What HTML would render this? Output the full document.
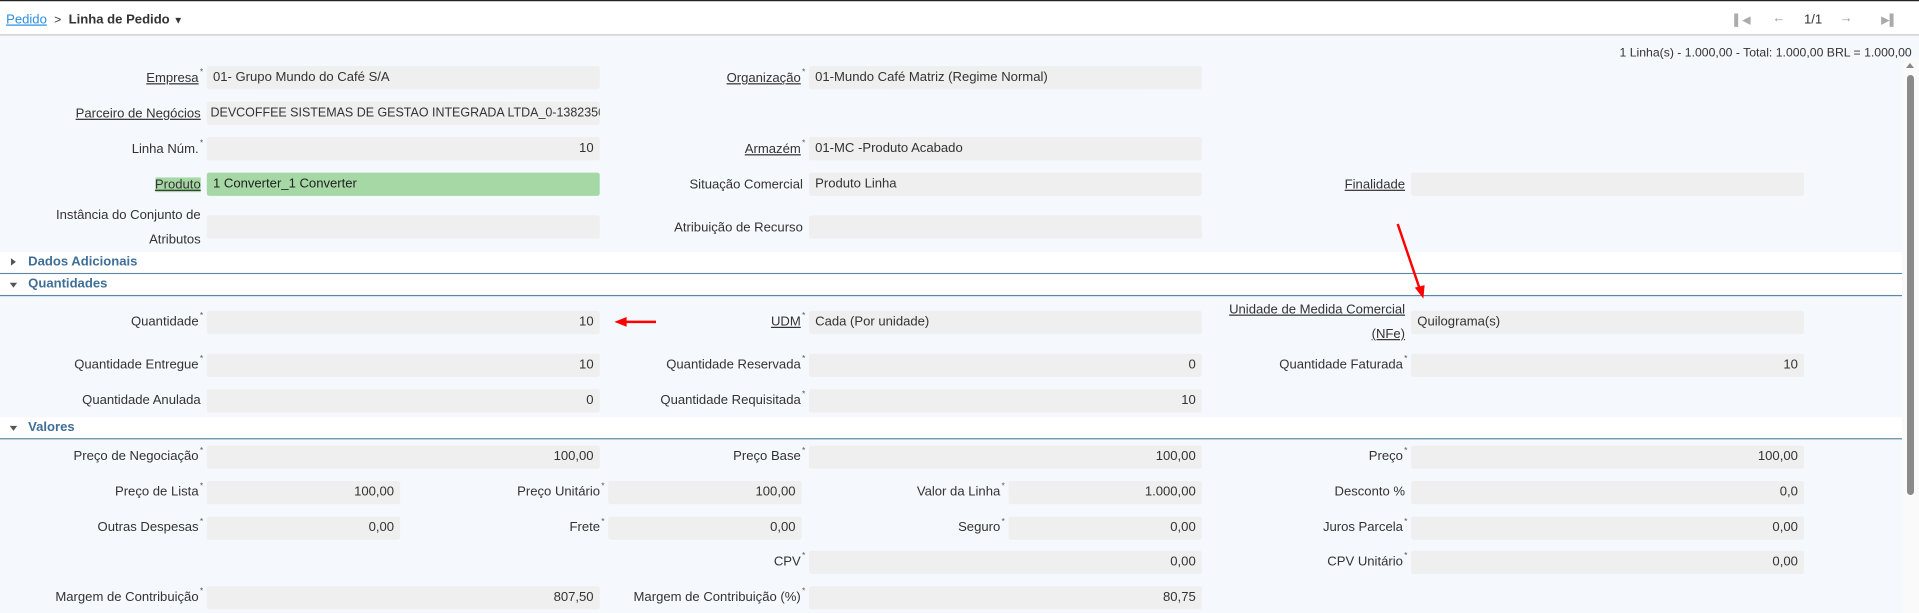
<!DOCTYPE html>
<html><head><meta charset="utf-8"><style>
html,body{margin:0;padding:0;width:1919px;height:613px;overflow:hidden;background:#f5f8fc;}
#w{position:absolute;left:0;top:0;width:1568px;height:501px;transform:scale(1.2239);transform-origin:0 0;font-family:"Liberation Sans",sans-serif;font-size:10.7px;color:#333;}
#top{position:absolute;left:0;top:0;width:1568px;height:29px;background:#fff;border-top:1px solid #222;border-bottom:1px solid #c8c8c8;box-sizing:border-box;}
.a{position:absolute;white-space:nowrap;}
.l{position:absolute;text-align:right;line-height:16px;height:16px;white-space:nowrap;}
.l sup{font-size:7px;vertical-align:top;line-height:0;position:relative;top:4px;margin-left:1px;color:#555;}
.u{text-decoration:underline;}
.i{position:absolute;height:19px;line-height:19px;background:#efefef;border-radius:2px;padding:0 5px;box-sizing:border-box;white-space:nowrap;overflow:hidden;}
.r{text-align:right;}
.hd{position:absolute;left:0;width:1554px;background:#fff;border-bottom:1px solid #5b87a8;height:17px;line-height:16px;font-weight:bold;color:#3f6f98;}
.hd span{position:absolute;left:23px;}
.tri{position:absolute;width:0;height:0;}
</style></head><body>
<div id="w">
<div id="top">
 <div class="a" style="left:5px;top:9px;"><span class="u" style="color:#2a8fe0">Pedido</span> <span style="font-size:10px;margin:0 3px">&gt;</span> <b>Linha de Pedido</b> <span style="font-size:8px">&#9660;</span></div>
 <div class="a" style="left:1417px;top:10px;color:#aaa;font-size:9px">&#9612;&#9664;</div>
 <div class="a" style="left:1448px;top:8px;color:#999">&larr;</div>
 <div class="a" style="left:1474px;top:9px;color:#333">1/1</div>
 <div class="a" style="left:1503px;top:8px;color:#999">&rarr;</div>
 <div class="a" style="left:1537px;top:10px;color:#aaa;font-size:9px">&#9654;&#9612;</div>
</div>
<div class="a" style="right:6px;top:38px;font-size:10px">1 Linha(s) - 1.000,00 - Total: 1.000,00 BRL = 1.000,00</div>

<div class="l" style="right:1402px;top:56px"><span class="u">Empresa</span><sup>*</sup></div>
<div class="i" style="left:169px;width:321px;top:54px">01- Grupo Mundo do Café S/A</div>
<div class="l" style="right:910px;top:56px"><span class="u">Organização</span><sup>*</sup></div>
<div class="i" style="left:661px;width:321px;top:54px">01-Mundo Café Matriz (Regime Normal)</div>
<div class="l" style="right:1404px;top:85px"><span class="u">Parceiro de Negócios</span></div>
<div class="i" style="left:169px;width:321px;top:83px;font-size:10.2px;padding:0 3px">DEVCOFFEE SISTEMAS DE GESTAO INTEGRADA LTDA_0-138235080</div>
<div class="l" style="right:1402px;top:114px">Linha Núm.<sup>*</sup></div>
<div class="i r" style="left:169px;width:321px;top:112px">10</div>
<div class="l" style="right:910px;top:114px"><span class="u">Armazém</span><sup>*</sup></div>
<div class="i" style="left:661px;width:321px;top:112px">01-MC -Produto Acabado</div>
<div class="l" style="right:1404px;top:143px"><span class="u" style="background:#a6d8a6">Produto</span></div>
<div class="i" style="left:169px;width:321px;top:141px;background:#a6d8a6;color:#222">1 Converter_1 Converter</div>
<div class="l" style="right:912px;top:143px">Situação Comercial</div>
<div class="i" style="left:661px;width:321px;top:141px">Produto Linha</div>
<div class="l" style="right:420px;top:143px"><span class="u">Finalidade</span></div>
<div class="i" style="left:1153px;width:321px;top:141px"></div>
<div class="l" style="right:1404px;top:166px;line-height:20px;height:40px">Instância do Conjunto de<br>Atributos</div>
<div class="i" style="left:169px;width:321px;top:176px"></div>
<div class="l" style="right:912px;top:178px">Atribuição de Recurso</div>
<div class="i" style="left:661px;width:321px;top:176px"></div>

<div class="hd" style="top:206px"><div class="tri" style="border-left:4px solid #555;border-top:3px solid transparent;border-bottom:3px solid transparent;top:5px;left:9px"></div><span>Dados Adicionais</span></div>
<div class="hd" style="top:224px"><div class="tri" style="border-top:4px solid #555;border-left:3px solid transparent;border-right:3px solid transparent;top:7px;left:8px"></div><span>Quantidades</span></div>

<div class="l" style="right:1402px;top:255px">Quantidade<sup>*</sup></div>
<div class="i r" style="left:169px;width:321px;top:254px">10</div>
<div class="l" style="right:910px;top:255px"><span class="u">UDM</span><sup>*</sup></div>
<div class="i" style="left:661px;width:321px;top:254px">Cada (Por unidade)</div>
<div class="l" style="right:420px;top:243px;line-height:20px;height:40px"><span class="u">Unidade de Medida Comercial<br>(NFe)</span></div>
<div class="i" style="left:1153px;width:321px;top:254px">Quilograma(s)</div>
<div class="l" style="right:1402px;top:290px">Quantidade Entregue<sup>*</sup></div>
<div class="i r" style="left:169px;width:321px;top:289px">10</div>
<div class="l" style="right:910px;top:290px">Quantidade Reservada<sup>*</sup></div>
<div class="i r" style="left:661px;width:321px;top:289px">0</div>
<div class="l" style="right:418px;top:290px">Quantidade Faturada<sup>*</sup></div>
<div class="i r" style="left:1153px;width:321px;top:289px">10</div>
<div class="l" style="right:1404px;top:319px">Quantidade Anulada</div>
<div class="i r" style="left:169px;width:321px;top:318px">0</div>
<div class="l" style="right:910px;top:319px">Quantidade Requisitada<sup>*</sup></div>
<div class="i r" style="left:661px;width:321px;top:318px">10</div>

<div class="hd" style="top:341px"><div class="tri" style="border-top:4px solid #555;border-left:3px solid transparent;border-right:3px solid transparent;top:7px;left:8px"></div><span>Valores</span></div>

<div class="l" style="right:1402px;top:365px">Preço de Negociação<sup>*</sup></div>
<div class="i r" style="left:169px;width:321px;top:364px">100,00</div>
<div class="l" style="right:910px;top:365px">Preço Base<sup>*</sup></div>
<div class="i r" style="left:661px;width:321px;top:364px">100,00</div>
<div class="l" style="right:418px;top:365px">Preço<sup>*</sup></div>
<div class="i r" style="left:1153px;width:321px;top:364px">100,00</div>
<div class="l" style="right:1402px;top:394px">Preço de Lista<sup>*</sup></div>
<div class="i r" style="left:169px;width:158px;top:393px">100,00</div>
<div class="l" style="right:1074px;top:394px">Preço Unitário<sup>*</sup></div>
<div class="i r" style="left:497px;width:158px;top:393px">100,00</div>
<div class="l" style="right:747px;top:394px">Valor da Linha<sup>*</sup></div>
<div class="i r" style="left:824px;width:158px;top:393px">1.000,00</div>
<div class="l" style="right:420px;top:394px">Desconto %</div>
<div class="i r" style="left:1153px;width:321px;top:393px">0,0</div>
<div class="l" style="right:1402px;top:423px">Outras Despesas<sup>*</sup></div>
<div class="i r" style="left:169px;width:158px;top:422px">0,00</div>
<div class="l" style="right:1074px;top:423px">Frete<sup>*</sup></div>
<div class="i r" style="left:497px;width:158px;top:422px">0,00</div>
<div class="l" style="right:747px;top:423px">Seguro<sup>*</sup></div>
<div class="i r" style="left:824px;width:158px;top:422px">0,00</div>
<div class="l" style="right:418px;top:423px">Juros Parcela<sup>*</sup></div>
<div class="i r" style="left:1153px;width:321px;top:422px">0,00</div>
<div class="l" style="right:910px;top:451px">CPV<sup>*</sup></div>
<div class="i r" style="left:661px;width:321px;top:450px">0,00</div>
<div class="l" style="right:418px;top:451px">CPV Unitário<sup>*</sup></div>
<div class="i r" style="left:1153px;width:321px;top:450px">0,00</div>
<div class="l" style="right:1402px;top:480px">Margem de Contribuição<sup>*</sup></div>
<div class="i r" style="left:169px;width:321px;top:479px">807,50</div>
<div class="l" style="right:910px;top:480px">Margem de Contribuição (%)<sup>*</sup></div>
<div class="i r" style="left:661px;width:321px;top:479px">80,75</div>

<svg style="position:absolute;left:0;top:0" width="1568" height="501">
 <line x1="536" y1="263" x2="510" y2="263" stroke="#f00" stroke-width="2"/>
 <polygon points="502,263 512,259 512,267" fill="#f00"/>
 <line x1="1142" y1="183" x2="1160" y2="236" stroke="#f00" stroke-width="2"/>
 <polygon points="1163,244 1156,235 1164,233" fill="#f00"/>
</svg>
</div>
<div style="position:absolute;left:1903px;top:58px;width:16px;height:555px;background:#fafafa"></div>
<div style="position:absolute;left:1906px;top:63px;width:0;height:0;border-left:4px solid transparent;border-right:4px solid transparent;border-bottom:5px solid #888"></div>
<div style="position:absolute;left:1907px;top:75px;width:7px;height:420px;background:#8a8a8a;border-radius:4px"></div>
</body></html>
